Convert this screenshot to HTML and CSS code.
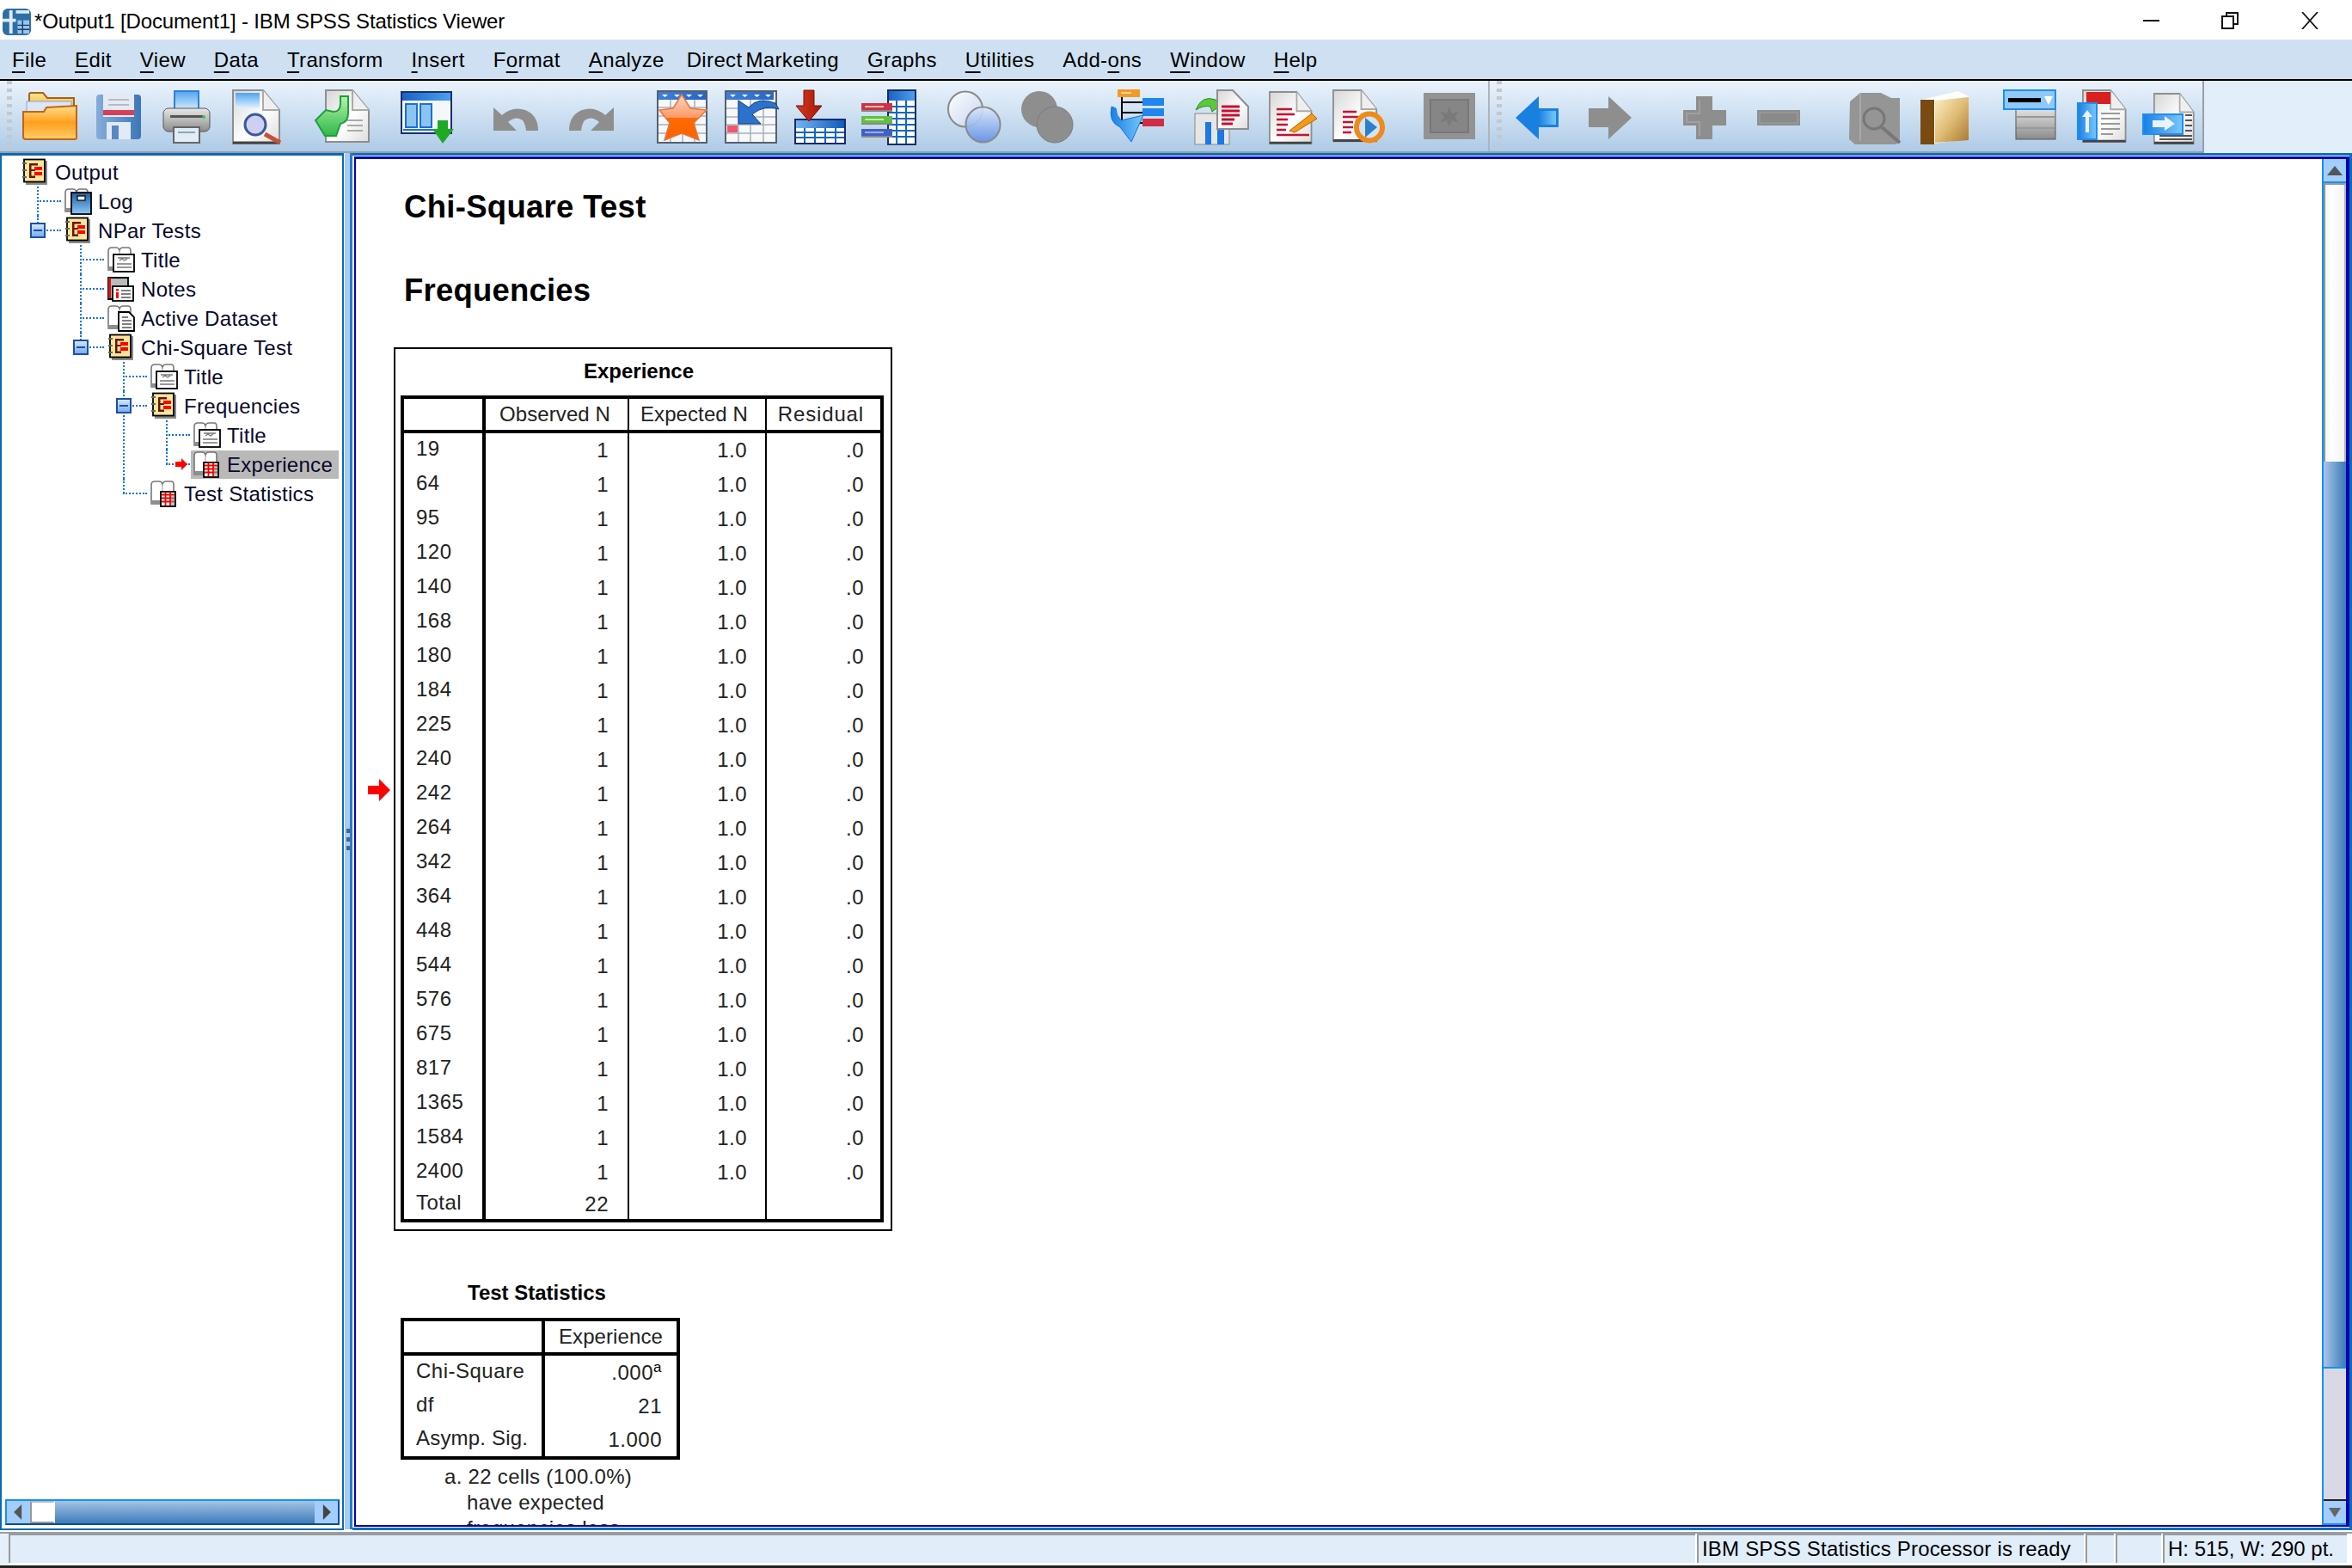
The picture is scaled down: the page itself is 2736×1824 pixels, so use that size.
FILE: index.html
```html
<!DOCTYPE html>
<html lang="en">
<head>
<meta charset="utf-8">
<title>*Output1 [Document1] - IBM SPSS Statistics Viewer</title>
<link rel="stylesheet" href="styles.css">
</head>
<body>
<svg class="defs" width="0" height="0" aria-hidden="true">
<defs>
<linearGradient id="gFolder" x1="0" y1="0" x2="0" y2="1"><stop offset="0" stop-color="#ffe08c"/><stop offset=".5" stop-color="#ff9f1c"/><stop offset="1" stop-color="#ffcf66"/></linearGradient>
<linearGradient id="gTab" x1="0" y1="0" x2="0" y2="1"><stop offset="0" stop-color="#ffe58f"/><stop offset="1" stop-color="#e8a93c"/></linearGradient>
<linearGradient id="gFloppy" x1="0" y1="0" x2="1" y2="0"><stop offset="0" stop-color="#86acd8"/><stop offset=".5" stop-color="#5f93cf"/><stop offset="1" stop-color="#3d76b6"/></linearGradient>
<linearGradient id="gBlueTop" x1="0" y1="0" x2="0" y2="1"><stop offset="0" stop-color="#4fa5f0"/><stop offset="1" stop-color="#e4f2fc"/></linearGradient>
<linearGradient id="gBar" x1="0" y1="0" x2="1" y2="0"><stop offset="0" stop-color="#1b62c4"/><stop offset="1" stop-color="#4aa0f0"/></linearGradient>
<linearGradient id="gBarR" x1="0" y1="0" x2="1" y2="0"><stop offset="0" stop-color="#74b4f2"/><stop offset="1" stop-color="#0f5cbc"/></linearGradient>
<linearGradient id="gGrey" x1="0" y1="0" x2="0" y2="1"><stop offset="0" stop-color="#e8e8e8"/><stop offset="1" stop-color="#8b8b8b"/></linearGradient>
<linearGradient id="gDoc" x1="0" y1="0" x2="1" y2="1"><stop offset="0" stop-color="#d6d6d6"/><stop offset=".55" stop-color="#ffffff"/><stop offset="1" stop-color="#dcdcdc"/></linearGradient>
<linearGradient id="gGreen" x1="0" y1="0" x2="0" y2="1"><stop offset="0" stop-color="#b4f4a8"/><stop offset="1" stop-color="#2fb84a"/></linearGradient>
<linearGradient id="gStar" x1="0" y1="0" x2="0" y2="1"><stop offset="0" stop-color="#ffd8c0"/><stop offset=".5" stop-color="#ff9a68"/><stop offset=".51" stop-color="#ff6a00"/><stop offset="1" stop-color="#ff6200"/></linearGradient>
<linearGradient id="gRed" x1="0" y1="0" x2="1" y2="0"><stop offset="0" stop-color="#d93a20"/><stop offset="1" stop-color="#a01808"/></linearGradient>
<linearGradient id="gCircA" x1="0" y1="0" x2="1" y2="1"><stop offset="0" stop-color="#ffffff"/><stop offset="1" stop-color="#c4d4f0"/></linearGradient>
<linearGradient id="gCircB" x1="0" y1="0" x2="0" y2="1"><stop offset="0" stop-color="#dce8fa"/><stop offset="1" stop-color="#5f8fe4"/></linearGradient>
<linearGradient id="gSky" x1="0" y1="0" x2="1" y2="0"><stop offset="0" stop-color="#1a7fe4"/><stop offset="1" stop-color="#78c8fa"/></linearGradient>
<linearGradient id="gBook" x1="0" y1="0" x2="1" y2="1"><stop offset="0" stop-color="#fbf0c4"/><stop offset=".5" stop-color="#e0bc74"/><stop offset="1" stop-color="#a87830"/></linearGradient>
<linearGradient id="gLog" x1="0" y1="0" x2="0" y2="1"><stop offset="0" stop-color="#1a5fa8"/><stop offset="1" stop-color="#8cc8f4"/></linearGradient>
<linearGradient id="gHead" x1="0" y1="0" x2="1" y2="0"><stop offset="0" stop-color="#3f7fd8"/><stop offset="1" stop-color="#2a66c4"/></linearGradient>

<symbol id="i-sec" viewBox="0 0 32 32">
<rect x="5" y="3" width="25" height="28" fill="#8a8a8a"/>
<rect x="3" y="1.500" width="24" height="26" fill="#fde69a" stroke="#000" stroke-width="1.800"/>
<rect x="1" y="5" width="5" height="2" fill="#666"/><rect x="1" y="13" width="5" height="2" fill="#666"/><rect x="1" y="21" width="5" height="2" fill="#666"/>
<rect x="9" y="6" width="2.500" height="17" fill="#70100a"/><rect x="9" y="6" width="10" height="2.500" fill="#70100a"/><rect x="9" y="13" width="7" height="2" fill="#70100a"/><rect x="9" y="20.500" width="7" height="2.500" fill="#70100a"/>
<rect x="15" y="10" width="9" height="4" fill="#f00"/><rect x="15" y="16" width="9" height="4" fill="#f00"/>
</symbol>
<symbol id="i-base" viewBox="0 0 32 32">
<path d="M1 28V6Q1 2 5 2H10Q13 2 14 5Q15 2 18 2H24Q27 2 27 6V28Z" fill="#fff" stroke="#777" stroke-width="1.600"/>
<path d="M14 5V24" stroke="#999" stroke-width="1"/>
<rect x="1" y="24" width="28" height="5" fill="#8e8e8e"/>
</symbol>
<symbol id="i-log" viewBox="0 0 32 32">
<use href="#i-base"/>
<rect x="8" y="6" width="23" height="25" fill="url(#gLog)" stroke="#000" stroke-width="1.800"/>
<rect x="15" y="10" width="9" height="5" fill="#fff" stroke="#000" stroke-width="1.200"/>
</symbol>
<symbol id="i-title" viewBox="0 0 32 32">
<use href="#i-base"/>
<rect x="7" y="10" width="24" height="20" fill="#fff" stroke="#000" stroke-width="1.800"/>
<path d="M12 14H26M14 17L17 15L20 17L23 15M11 21H28M11 25H28" stroke="#777" stroke-width="1.400" fill="none"/>
</symbol>
<symbol id="i-notes" viewBox="0 0 32 32">
<path d="M1 28V3H24V28Z" fill="#bbb" stroke="#000" stroke-width="1.800"/>
<rect x="1" y="3" width="3" height="24" fill="#d01818"/>
<rect x="6" y="13" width="24" height="17" fill="#fff" stroke="#000" stroke-width="1.800"/>
<rect x="10" y="16" width="3" height="2.500" fill="#f00"/><rect x="10" y="20" width="3" height="7" fill="#f00"/>
<path d="M16 18H27M16 22H27M16 26H27" stroke="#555" stroke-width="1.400"/>
</symbol>
<symbol id="i-data" viewBox="0 0 32 32">
<use href="#i-base"/>
<path d="M13 9H25L31 15V31H13Z" fill="#fff" stroke="#000" stroke-width="1.800"/>
<path d="M17 15H24M17 19H28M17 23H28M17 27H28" stroke="#555" stroke-width="1.500"/>
</symbol>
<symbol id="i-table" viewBox="0 0 32 32">
<use href="#i-base"/>
<rect x="12" y="14" width="17" height="17" fill="#fff" stroke="#000" stroke-width="1.800"/>
<path d="M13 17.500H28M13 21.500H28M13 25.500H28M17.500 14V30M23 14V30" stroke="#e00" stroke-width="1.800"/>
<rect x="24" y="18" width="4" height="12" fill="#999" opacity=".6"/>
</symbol>

<symbol id="t-doc" viewBox="0 0 64 64">
<path d="M1 1H36L55 24V63H1Z" fill="url(#gDoc)" stroke="#8e8e8e" stroke-width="2"/>
<path d="M36 1V24H55" fill="#efefef" stroke="#aaa" stroke-width="2"/>
<path d="M1 62H55" stroke="#444" stroke-width="3"/>
</symbol>
<symbol id="t-head" viewBox="0 0 64 64">
<rect x="2" y="3" width="55" height="9" fill="url(#gHead)"/>
<path d="M6 6H13L9.500 9ZM20 6H27L23.500 9ZM34 6H41L37.500 9ZM47 6H54L50.500 9Z" fill="#fff"/>
</symbol>
</defs>
</svg>

<div class="app">
  <header class="titlebar">
    <svg class="appicon" viewBox="0 0 34 32"><rect x="0" y="0" width="34" height="32" rx="6" fill="#2d6ea6"/><path d="M0 14H16M10 2V30M16 4H32" stroke="#dbeafa" stroke-width="4" fill="none"/><rect x="18" y="14" width="14" height="16" fill="#9cc4e8"/><path d="M18 20H32M18 25H32M24 14V30" stroke="#14406e" stroke-width="1.500"/></svg>
    <span class="titletext">*Output1 [Document1] - IBM SPSS Statistics Viewer</span>
    <div class="winctl">
      <svg class="wbtn wmin" viewBox="0 0 20 20"><path d="M0 10H19" stroke="#111" stroke-width="2"/></svg>
      <svg class="wbtn wmax" viewBox="0 0 20 20"><rect x="1" y="5" width="13" height="14" fill="#fff" stroke="#111" stroke-width="2"/><path d="M6 4V1H19V14H15" fill="none" stroke="#111" stroke-width="2"/></svg>
      <svg class="wbtn wclose" viewBox="0 0 20 20"><path d="M1 0L19 20M19 0L1 20" stroke="#111" stroke-width="1.800"/></svg>
    </div>
  </header>

  <nav class="menubar">
    <span><u>F</u>ile</span><span><u>E</u>dit</span><span><u>V</u>iew</span><span><u>D</u>ata</span><span><u>T</u>ransform</span><span><u>I</u>nsert</span><span>F<u>o</u>rmat</span><span><u>A</u>nalyze</span><span class="dm">Direct <u>M</u>arketing</span><span><u>G</u>raphs</span><span><u>U</u>tilities</span><span>Add-<u>o</u>ns</span><span><u>W</u>indow</span><span><u>H</u>elp</span>
  </nav>

  <div class="toolrow">
    <div class="toolbar">
      <div class="grip"></div>
      <svg class="ti" viewBox="0 0 64 64"><path d="M8 14V6Q8 4 10 4H24L29 10H60V26H8Z" fill="url(#gTab)" stroke="#a8601c" stroke-width="2"/><rect x="5" y="14" width="52" height="24" fill="#dbe7f8" stroke="#8ea6c8"/><path d="M1 26H25L28 21L63 19V56Q63 58 61 58H4Q1 58 1 55Z" fill="url(#gFolder)" stroke="#c0641a" stroke-width="2"/></svg>
      <svg class="ti" viewBox="0 0 64 64"><rect x="0" y="6" width="52" height="52" rx="4" fill="url(#gFloppy)"/><rect x="8" y="6" width="36" height="26" fill="#e6eaf0"/><path d="M14 12H38M14 18H38" stroke="#b4bcc8" stroke-width="2"/><rect x="8" y="24" width="36" height="6" fill="#d4405c"/><rect x="12" y="38" width="28" height="20" fill="#e2eaf6"/><rect x="18" y="42" width="8" height="16" fill="#5689c4"/></svg>
      <svg class="ti" viewBox="0 0 64 64"><rect x="13" y="2" width="28" height="24" fill="url(#gBlueTop)" stroke="#2f7fd8" stroke-width="2"/><rect x="0" y="22" width="54" height="27" rx="6" fill="url(#gGrey)" stroke="#555"/><rect x="8" y="30" width="38" height="3" fill="#555"/><circle cx="47" cy="32" r="2" fill="#38c060"/><rect x="12" y="44" width="30" height="18" fill="#e2ecf8" stroke="#666" stroke-width="2"/><path d="M17 50H37" stroke="#8aa" stroke-width="2"/></svg>
      <svg class="ti" viewBox="0 0 64 64"><use href="#t-doc"/><rect x="4" y="4" width="28" height="18" fill="url(#gBlueTop)"/><path d="M38 52L56 62" stroke="#c8503a" stroke-width="5"/><circle cx="27" cy="41" r="12" fill="#cfcff4" stroke="#3a5a9a" stroke-width="3"/></svg>
      <svg class="ti" viewBox="0 0 64 64"><g transform="translate(12 0)"><path d="M1 1H32L51 24V61H1Z" fill="url(#gDoc)" stroke="#8e8e8e" stroke-width="2"/><path d="M32 1V24H51" fill="#efefef" stroke="#aaa" stroke-width="2"/><path d="M26 36H44M26 42H44M26 48H44" stroke="#aaa" stroke-width="2"/></g><path d="M1 36L13 24L22 26Q30 26 30 16V8H39V28Q39 38 30 40L25 54H12Z" fill="url(#gGreen)" stroke="#1e9e3e" stroke-width="2"/></svg>
      <svg class="ti" viewBox="0 0 64 64"><rect x="1" y="3" width="58" height="48" fill="#f4f8fc" stroke="#1a2f70" stroke-width="2"/><rect x="2" y="4" width="56" height="9" fill="url(#gBar)"/><rect x="6" y="17" width="13" height="27" fill="#8cc4f0" stroke="#1a6fd8" stroke-width="2"/><rect x="23" y="17" width="13" height="27" fill="#8cc4f0" stroke="#1a6fd8" stroke-width="2"/><path d="M3 47H40" stroke="#1a6fd8" stroke-width="2"/><path d="M43 36H55V46H62L49 63L37 46H43Z" fill="#1faa26"/></svg>
      <svg class="ti" viewBox="0 0 64 64"><path d="M0 21V48H27L17 38Q26 30 34 36Q37 40 38 48H52Q52 30 37 24Q22 19 10 30Z" fill="#8e8e8e"/></svg>
      <svg class="ti" viewBox="0 0 64 64"><path d="M52 21V48H25L35 38Q26 30 18 36Q15 40 14 48H0Q0 30 15 24Q30 19 42 30Z" fill="#8e8e8e"/></svg>
      <svg class="ti" viewBox="0 0 64 64"><rect x="1" y="2" width="57" height="60" fill="#f6f8fa" stroke="#55606e" stroke-width="2"/><use href="#t-head"/><path d="M2 21H57M2 31H57M2 41H57M2 51H57M16 12V61M30 12V61M44 12V61" stroke="#a8b0b8" stroke-width="1.500"/><path d="M29 6L39 22L58 24L43 39L49 59L29 51L9 59L15 39L3 24L19 22Z" fill="url(#gStar)" stroke="#e07840" stroke-width="1.500"/></svg>
      <svg class="ti" viewBox="0 0 64 64"><rect x="1" y="2" width="59" height="60" fill="#f6f8fa" stroke="#55606e" stroke-width="2"/><use href="#t-head"/><path d="M2 22H59M2 32H59M2 41H59M2 51H59M16 12V61M30 12V61M45 12V61" stroke="#a8b0b8" stroke-width="1.500"/><rect x="3" y="42" width="12" height="8" fill="#f0566e"/><path d="M16 13V40H42L32 29Q47 17 63 23L59 16Q39 8 28 21Z" fill="#2c72cc" stroke="#163c86"/></svg>
      <svg class="ti" viewBox="0 0 64 64"><rect x="1" y="35" width="58" height="28" fill="#fff" stroke="#1a2a6a" stroke-width="2"/><rect x="2" y="36" width="56" height="9" fill="url(#gBarR)"/><path d="M2 50H58M2 56H58M12 45V62M24 45V62M36 45V62M48 45V62" stroke="#1466bc" stroke-width="2"/><path d="M11 1H23V19H32L17 37L2 19H11Z" fill="url(#gRed)" stroke="#7a1008"/></svg>
      <svg class="ti" viewBox="0 0 64 64"><rect x="31" y="1" width="32" height="63" fill="#fff" stroke="#1a2a6a" stroke-width="2"/><rect x="32" y="2" width="30" height="11" fill="url(#gBar)"/><path d="M32 20H62M32 27H62M32 34H62M32 41H62M32 48H62M32 55H62M41 13V63M52 13V63" stroke="#1466bc" stroke-width="2"/><rect x="0" y="16" width="36" height="8" fill="#d03048"/><rect x="4" y="19" width="22" height="2" fill="#f0c0a0"/><rect x="0" y="24" width="36" height="2" fill="#888"/><rect x="0" y="31" width="36" height="8" fill="#60c040"/><rect x="4" y="34" width="22" height="2" fill="#c8f0a0"/><rect x="0" y="39" width="36" height="2" fill="#888"/><rect x="0" y="46" width="36" height="8" fill="#4060c8"/><rect x="4" y="49" width="22" height="2" fill="#a0a8f8"/><rect x="0" y="54" width="36" height="2" fill="#888"/></svg>
      <svg class="ti" viewBox="0 0 64 64"><ellipse cx="21" cy="23" rx="20" ry="20.500" fill="url(#gCircA)" stroke="#8a8a8a" stroke-width="2"/><ellipse cx="41.500" cy="41" rx="20" ry="20.500" fill="url(#gCircB)" fill-opacity=".9" stroke="#8a8a8a" stroke-width="2"/></svg>
      <svg class="ti" viewBox="0 0 64 64"><ellipse cx="21" cy="23" rx="21" ry="21" fill="#8e8e8e"/><ellipse cx="39" cy="41" rx="21" ry="21" fill="#8e8e8e" stroke="#7c7c7c"/></svg>
      <svg class="ti" viewBox="0 0 64 64"><path d="M15 9V44M15 15H39M15 27H39M15 39H39" stroke="#000" stroke-width="2" fill="none"/><rect x="10" y="0" width="26" height="9" fill="#f09a28"/><rect x="14" y="3" width="12" height="2" fill="#ffd090"/><rect x="39" y="10" width="25" height="9" fill="#1f86ee"/><rect x="39" y="22" width="25" height="9" fill="#1f86ee"/><rect x="39" y="34" width="25" height="9" fill="#d02c44"/><path d="M3 20Q-1 38 13 44L26 61L40 30L14 36Q8 30 8 22Z" fill="url(#gSky)" stroke="#1a70d8"/></svg>
      <svg class="ti" viewBox="0 0 64 64"><rect x="0" y="28" width="40" height="36" fill="#e6e6e6" stroke="#888"/><rect x="12" y="38" width="7" height="26" fill="#1a78e8"/><rect x="26" y="38" width="8" height="26" fill="#1a78e8"/><path d="M1 24Q8 6 24 12L30 18L20 26L18 20Q10 18 1 24Z" fill="#5cc83c" stroke="#2e8a20"/><path d="M26 1H44L62 20V46H26Z" fill="url(#gDoc)" stroke="#8e8e8e" stroke-width="2"/><path d="M31 20H52M31 25H52M31 30H52M31 35H46M31 40H44" stroke="#c8102e" stroke-width="3"/></svg>
      <svg class="ti" viewBox="0 0 64 64"><g transform="translate(0 2) scale(.9 .97)"><use href="#t-doc"/></g><path d="M9 23H27M9 29H30M9 35H22M9 41H22M9 47H20M9 53H47" stroke="#c8102e" stroke-width="2.600"/><path d="M24 48L50 28L56 34L30 50Z" fill="#f59a16" stroke="#b86008"/></svg>
      <svg class="ti" viewBox="0 0 64 64"><g transform="scale(.93 .96)"><use href="#t-doc"/></g><path d="M12 26H28M12 32H30M12 38H24M12 44H24M12 50H22" stroke="#c8102e" stroke-width="2.600"/><ellipse cx="43" cy="44" rx="15" ry="15.500" fill="#cfe4f8" stroke="#f08a18" stroke-width="6"/><path d="M38 33L52 44L38 56Z" fill="#2f7fc8"/></svg>
      <svg class="ti" viewBox="0 0 64 64"><rect x="0" y="4" width="60" height="54" fill="#939393"/><rect x="8" y="12" width="44" height="38" fill="#868686" stroke="#777" stroke-width="2"/><path d="M30 20L33 28L41 26L36 32L41 39L33 36L30 44L27 36L19 39L24 32L19 26L27 28Z" fill="#7a7a7a"/></svg>
      <div class="sepcell"><div class="grip"></div></div>
      <svg class="ti" viewBox="0 0 64 64"><path d="M0 33L27 8V22H50V44H27V58Z" fill="#1a80e0"/><rect x="27" y="25" width="20" height="16" fill="url(#gSky)"/></svg>
      <svg class="ti" viewBox="0 0 64 64"><path d="M50 33L23 8V22H0V44H23V58Z" fill="#8e8e8e"/></svg>
      <svg class="ti" viewBox="0 0 64 64"><path d="M15 8H34V24H50V42H34V58H15V42H0V24H15Z" fill="#8e8e8e"/><path d="M19 12V28H4V38H19V54" stroke="#a0a0a0" stroke-width="2" fill="none"/></svg>
      <svg class="ti" viewBox="0 0 64 64"><rect x="0" y="24" width="50" height="18" fill="#8e8e8e"/><rect x="3" y="27" width="44" height="12" fill="#8a8a8a" stroke="#a0a0a0"/></svg>
      <svg class="ti" viewBox="0 0 64 64"><path d="M2 14L14 4H38L50 10H60V58L56 64H8L1 58Z" fill="#959595"/><path d="M14 4V60" stroke="#a8a8a8" stroke-width="2"/><circle cx="30" cy="34" r="12" fill="none" stroke="#777" stroke-width="3"/><path d="M39 44L60 62" stroke="#777" stroke-width="4"/></svg>
      <svg class="ti" viewBox="0 0 64 64"><path d="M1 12L44 2L56 8V58L16 63L1 60Z" fill="#fff"/><rect x="0" y="12" width="16" height="52" fill="#7a4a10"/><path d="M17 13L56 9V59L17 62Z" fill="url(#gBook)"/></svg>
      <svg class="ti" viewBox="0 0 64 64"><rect x="15" y="20" width="46" height="38" fill="url(#gGrey)" stroke="#555"/><path d="M16 32H60M16 45H60" stroke="#999" stroke-width="2"/><rect x="1" y="1" width="60" height="22" fill="#90c8fa" stroke="#1f8cf4" stroke-width="2"/><rect x="6" y="10" width="38" height="5" fill="#000"/><path d="M48 8H58L53 18Z" fill="#fff"/></svg>
      <svg class="ti" viewBox="0 0 64 64"><g transform="translate(6 0) scale(.92 .97)"><use href="#t-doc"/></g><rect x="11" y="3" width="28" height="14" fill="#d82020"/><path d="M28 28H50M28 34H50M28 40H50M28 46H50M28 52H42" stroke="#999" stroke-width="2"/><rect x="1" y="16" width="22" height="42" fill="url(#gSky)" stroke="#1f8cf4" stroke-width="2"/><path d="M12 24L18 32H14V50H10V32H6Z" fill="#eaf2fb"/></svg>
      <svg class="ti" viewBox="0 0 64 64"><g transform="translate(13 4) scale(.85 .94)"><use href="#t-doc"/></g><path d="M50 30H58M50 36H58M50 42H58M50 48H58M20 54H58M20 58H58" stroke="#555" stroke-width="2"/><rect x="1" y="29" width="46" height="23" fill="url(#gSky)" stroke="#1f8cf4" stroke-width="2"/><path d="M12 36H26V31L38 40L26 48V44H12Z" fill="#eaf2fb"/></svg>
    </div>
    <div class="toolrest"></div>
  </div>

  <div class="workarea">
    <aside class="leftpane">
      <div class="tree">
        <ul class="root">
          <li>
            <div class="row"><svg class="ni"><use href="#i-sec"/></svg><span class="lbl rootlbl">Output</span></div>
            <ul>
              <li><div class="row"><svg class="ni"><use href="#i-log"/></svg><span class="lbl">Log</span></div></li>
              <li class="last">
                <span class="box"></span>
                <div class="row"><svg class="ni"><use href="#i-sec"/></svg><span class="lbl">NPar Tests</span></div>
                <ul>
                  <li><div class="row"><svg class="ni"><use href="#i-title"/></svg><span class="lbl">Title</span></div></li>
                  <li><div class="row"><svg class="ni"><use href="#i-notes"/></svg><span class="lbl">Notes</span></div></li>
                  <li><div class="row"><svg class="ni"><use href="#i-data"/></svg><span class="lbl">Active Dataset</span></div></li>
                  <li class="last">
                    <span class="box"></span>
                    <div class="row"><svg class="ni"><use href="#i-sec"/></svg><span class="lbl">Chi-Square Test</span></div>
                    <ul>
                      <li><div class="row"><svg class="ni"><use href="#i-title"/></svg><span class="lbl">Title</span></div></li>
                      <li>
                        <span class="box"></span>
                        <div class="row"><svg class="ni"><use href="#i-sec"/></svg><span class="lbl">Frequencies</span></div>
                        <ul>
                          <li><div class="row"><svg class="ni"><use href="#i-title"/></svg><span class="lbl">Title</span></div></li>
                          <li class="last">
                            <svg class="treearrow" viewBox="0 0 14 14"><path d="M0 4H7V0L14 7L7 14V10H0Z" fill="#f00"/></svg>
                            <div class="row"><span class="selected"><svg class="ni"><use href="#i-table"/></svg><span class="lbl">Experience</span></span></div>
                          </li>
                        </ul>
                      </li>
                      <li class="last"><div class="row"><svg class="ni"><use href="#i-table"/></svg><span class="lbl">Test Statistics</span></div></li>
                    </ul>
                  </li>
                </ul>
              </li>
            </ul>
          </li>
        </ul>
      </div>
      <div class="hscroll">
        <div class="sbtn"><svg viewBox="0 0 12 20"><path d="M10 0V20L0 10Z" fill="#555"/></svg></div>
        <div class="hthumb"></div>
        <div class="htrack"></div>
        <div class="sbtn"><svg viewBox="0 0 12 20"><path d="M2 0V20L12 10Z" fill="#444"/></svg></div>
      </div>
    </aside>
    <div class="splitter"><span class="dots"></span></div>
    <section class="mainframe">
      <div class="mainpane">
        <div class="content">
          <svg class="cursorarrow" viewBox="0 0 26 26"><path d="M0 8H13V0L26 13L13 26V18H0Z" fill="#f00"/></svg>
          <h1 class="heading">Chi-Square Test</h1>
          <h2 class="heading sub">Frequencies</h2>
          <div class="frame">
            <div class="tabletitle">Experience</div>
            <table class="pivot big">
              <colgroup><col class="c1"><col class="c2"><col class="c3"><col class="c4"></colgroup>
              <thead><tr><th class="thick"></th><th>Observed N</th><th>Expected N</th><th class="end wide">Residual</th></tr></thead>
              <tbody>
                <tr><td class="lab">19</td><td>1</td><td>1.0</td><td class="end">.0</td></tr>
                <tr><td class="lab">64</td><td>1</td><td>1.0</td><td class="end">.0</td></tr>
                <tr><td class="lab">95</td><td>1</td><td>1.0</td><td class="end">.0</td></tr>
                <tr><td class="lab">120</td><td>1</td><td>1.0</td><td class="end">.0</td></tr>
                <tr><td class="lab">140</td><td>1</td><td>1.0</td><td class="end">.0</td></tr>
                <tr><td class="lab">168</td><td>1</td><td>1.0</td><td class="end">.0</td></tr>
                <tr><td class="lab">180</td><td>1</td><td>1.0</td><td class="end">.0</td></tr>
                <tr><td class="lab">184</td><td>1</td><td>1.0</td><td class="end">.0</td></tr>
                <tr><td class="lab">225</td><td>1</td><td>1.0</td><td class="end">.0</td></tr>
                <tr><td class="lab">240</td><td>1</td><td>1.0</td><td class="end">.0</td></tr>
                <tr><td class="lab">242</td><td>1</td><td>1.0</td><td class="end">.0</td></tr>
                <tr><td class="lab">264</td><td>1</td><td>1.0</td><td class="end">.0</td></tr>
                <tr><td class="lab">342</td><td>1</td><td>1.0</td><td class="end">.0</td></tr>
                <tr><td class="lab">364</td><td>1</td><td>1.0</td><td class="end">.0</td></tr>
                <tr><td class="lab">448</td><td>1</td><td>1.0</td><td class="end">.0</td></tr>
                <tr><td class="lab">544</td><td>1</td><td>1.0</td><td class="end">.0</td></tr>
                <tr><td class="lab">576</td><td>1</td><td>1.0</td><td class="end">.0</td></tr>
                <tr><td class="lab">675</td><td>1</td><td>1.0</td><td class="end">.0</td></tr>
                <tr><td class="lab">817</td><td>1</td><td>1.0</td><td class="end">.0</td></tr>
                <tr><td class="lab">1365</td><td>1</td><td>1.0</td><td class="end">.0</td></tr>
                <tr><td class="lab">1584</td><td>1</td><td>1.0</td><td class="end">.0</td></tr>
                <tr><td class="lab">2400</td><td>1</td><td>1.0</td><td class="end">.0</td></tr>
                <tr class="total"><td class="lab">Total</td><td>22</td><td></td><td class="end"></td></tr>
              </tbody>
            </table>
          </div>
          <div class="stats">
            <div class="tabletitle stattitle">Test Statistics</div>
            <table class="pivot small">
              <colgroup><col class="s1"><col class="s2"></colgroup>
              <thead><tr><th class="thick"></th><th class="end">Experience</th></tr></thead>
              <tbody>
                <tr><td class="lab">Chi-Square</td><td class="end">.000<sup>a</sup></td></tr>
                <tr><td class="lab">df</td><td class="end">21</td></tr>
                <tr><td class="lab sig">Asymp. Sig.</td><td class="end">1.000</td></tr>
              </tbody>
            </table>
            <p class="footnote">a. 22 cells (100.0%)<br>have expected<br>frequencies less</p>
          </div>
        </div>
        <div class="vscroll">
          <div class="vbtn"><svg viewBox="0 0 20 12"><path d="M0 12H20L10 0Z" fill="#555"/></svg></div>
          <div class="vthumb"></div>
          <div class="vtrack"></div>
          <div class="vthumb lower"></div>
          <div class="vbtn"><svg viewBox="0 0 20 12"><path d="M2 0H18L10 12Z" fill="#666"/></svg></div>
        </div>
      </div>
    </section>
  </div>

  <footer class="statusbar">
    <div class="cell grow"></div>
    <div class="cell ready">IBM SPSS Statistics Processor is ready</div>
    <div class="cell w33"></div>
    <div class="cell w53"></div>
    <div class="cell size">H: 515, W: 290 pt.</div>
  </footer>
</div>
</body>
</html>
```

FILE: styles.css
```css
* { box-sizing: border-box; }
html, body { margin: 0; padding: 0; }
body {
  width: 2736px;
  height: 1824px;
  overflow: hidden;
  background: #fff;
  font-family: "Liberation Sans", Arial, sans-serif;
  font-size: 24px;
  color: #111;
}
.defs { position: absolute; }
.app { display: flex; flex-direction: column; height: 1824px; }

/* title bar */
.titlebar { display: flex; align-items: center; height: 46px; flex: none; padding-left: 3px; background: #fff; }
.appicon { width: 33px; height: 31px; flex: none; margin-top: 4px; }
.titletext { margin-left: 4px; letter-spacing: -.15px; white-space: nowrap; color: #000; margin-top: 3px; }
.winctl { margin-left: auto; display: flex; align-items: center; padding-right: 39px; }
.wbtn { width: 20px; height: 20px; display: block; margin-top: 1px; }
.wmin { margin-right: 71px; }
.wmax { margin-right: 73px; }

/* menu */
.menubar {
  display: flex; align-items: center; gap: 33px; flex: none;
  height: 48px; padding: 1px 0 0 14px;
  background: #cee0f1; border-bottom: 2px solid #000;
  white-space: nowrap; color: #000;
}
.menubar span { letter-spacing: .35px; }
.menubar .dm { margin-left: -7px; word-spacing: -3px; }
.menubar u { text-decoration-thickness: 2px; text-underline-offset: 5px; }

/* toolbar */
.toolrow { display: flex; flex: none; height: 84px; }
.toolbar {
  width: 2564px; height: 84px; padding-left: 8px;
  display: grid; align-items: center;
  grid-template-columns: 18px 86px 78px 80px 96px 100px 108px 88px 102px 79px 81px 78px 100px 86px 102px 100px 86px 74px 106px 75px 32px 85px 110px 86px 106px 84px 96px 86px 76px 70px;
  background: linear-gradient(#eaf3fc, #afcbe7);
  border-bottom: 2px solid #9a9fa5;
  border-right: 2px solid #9a9fa5;
}
.ti { width: 64px; height: 64px; margin-top: 2px; overflow: visible; display: block; }
.grip {
  width: 6px; height: 82px;
  background: repeating-linear-gradient(#c4c8cc 0 4px, transparent 4px 9px);
}
.sepcell { height: 82px; border-left: 2px solid #b0b4b8; padding-left: 8px; }
.toolrest { flex: 1; background: #e2eefa; }

/* work area */
.workarea { flex: 1; display: flex; min-height: 0; padding-bottom: 2px; background: #fff; }
.leftpane {
  width: 400px; flex: none; display: flex; flex-direction: column;
  border: 3px solid #0a68b8; border-right-width: 2px; border-left-width: 2px; border-bottom-width: 2px;
  padding: 0 3px 4px 4px; background: #fff;
}
.tree { flex: 1; min-height: 0; padding-top: 2px; overflow: hidden; margin-left: -6px; }
.tree ul { list-style: none; margin: 0; padding: 0 0 0 50px; }
.tree ul.root { padding-left: 0; margin-left: -7px; }
.tree li { position: relative; }
.tree ul ul > li::before {
  content: ""; position: absolute; left: 0; top: 0; bottom: 0;
  border-left: 2px dotted #0b72dc;
}
.tree ul ul > li.last::before { bottom: auto; height: 17px; }
.tree ul ul > li::after {
  content: ""; position: absolute; left: 0; top: 16px; width: 28px;
  border-top: 2px dotted #0b72dc;
}
.row { height: 34px; display: flex; align-items: center; padding-left: 32px; position: relative; z-index: 1; white-space: nowrap; }
.ni { width: 32px; height: 32px; flex: none; }
.lbl { margin: 2px 0 0 7px; letter-spacing: .3px; color: #08082a; }
.selected { display: flex; align-items: center; height: 33px; margin-left: -3px; padding: 0 7px 0 3px; background: #b9b9b9; }
.box {
  position: absolute; left: -8px; top: 8px; width: 18px; height: 18px; z-index: 2;
  border: 2px solid #1b50a8; background: linear-gradient(#d4e5fb, #7aaeee);
}
.box::after { content: ""; position: absolute; left: 2px; right: 2px; top: 6px; height: 2px; background: #1b50a8; }
.treearrow { position: absolute; left: 11px; top: 10px; width: 14px; height: 14px; z-index: 2; }

/* scrollbars */
.hscroll {
  height: 30px; flex: none; display: flex; margin-top: 0;
  border: 2px solid #1690f0; border-bottom-color: #0a4f90; border-right-color: #0a4f90;
}
.sbtn { width: 27px; flex: none; background: #a2cdfc; display: flex; align-items: center; justify-content: center; }
.sbtn svg { width: 11px; height: 18px; }
.hthumb { width: 29px; flex: none; background: #fff; border: 2px solid #aaa; border-color: #bbb #fff #999 #999; }
.htrack { flex: 1; background: linear-gradient(#a4c4e4, #3d7cbb); }

.splitter {
  width: 9px; flex: none; margin-left: 1px; margin-bottom: 1px; position: relative;
  background: linear-gradient(90deg, #a2cdfc 0 6px, #2c7ac0 6px);
}
.dots {
  position: absolute; left: 2px; top: 786px; width: 4px; height: 26px;
  background: repeating-linear-gradient(#44639a 0 5px, transparent 5px 10px);
}
.mainframe {
  flex: 1; min-width: 0; display: flex; padding: 1px 0 1px 2px;
  border-top: 3px solid #0f6db8; border-right: 3px solid #0f6db8; border-bottom: 3px solid #0f6db8;
}
.mainpane {
  flex: 1; min-width: 0; display: flex; background: #fff;
  border: 3px solid #0000b4; border-left-width: 2px; border-bottom-width: 2px; border-right-width: 4px;
}
.content { flex: 1; min-width: 0; overflow: hidden; padding: 34px 0 0 56px; position: relative; color: #000; }
.cursorarrow { position: absolute; left: 14px; top: 721px; width: 26px; height: 26px; }

.vscroll { width: 28px; flex: none; display: flex; flex-direction: column; border-left: 2px solid #1690f0; }
.vbtn { height: 28px; flex: none; background: #a2cdfc; display: flex; align-items: center; justify-content: center; border-bottom: 2px solid #1690f0; }
.vbtn svg { width: 18px; height: 11px; }
.vthumb { height: 324px; flex: none; background: linear-gradient(90deg, #f4f4f6, #fff 30%, #f2f2f4); border-left: 2px solid #8d959b; border-right: 2px solid #b4b4b4; border-top: 2px solid #999; }
.vtrack { flex: 1; background: linear-gradient(90deg, #a8c6e6, #3b7ab9); }
.vthumb.lower { height: 156px; background: #d9d9e6; border: 0; border-top: 2px solid #1690f0; border-bottom: 2px solid #222; }

/* output */
.heading { margin: 0; font-size: 36.500px; line-height: 44px; font-weight: bold; letter-spacing: .3px; color: #000; }
.sub { margin-top: 53px; letter-spacing: .2px; }
.frame { width: 580px; margin: 44px 0 0 -12px; border: 2px solid #000; padding: 0 6px 8px; }
.tabletitle { height: 54px; line-height: 51px; text-align: center; font-weight: bold; padding-right: 10px; }
.pivot { border-collapse: separate; border-spacing: 0; table-layout: fixed; border: 4px solid #000; color: #222; }
.big { width: 562px; }
.small { width: 325px; }
.c1 { width: 95px; } .c2 { width: 167px; } .c3 { width: 160px; } .c4 { width: 132px; }
.s1 { width: 164px; } .s2 { width: 153px; }
.pivot th, .pivot td { padding: 0 21px 0 0; text-align: right; font-weight: normal; line-height: 24px; letter-spacing: .5px; border-right: 2px solid #000; white-space: nowrap; }
.pivot th { height: 40px; padding-right: 20px; letter-spacing: .1px; border-bottom: 4px solid #000; }
.pivot td { height: 40px; }
.pivot .total td { height: 34px; }
.pivot th.thick { border-right-width: 4px; }
.pivot td.lab { text-align: left; padding: 0 0 4px 14px; border-right-width: 4px; }
.pivot td.sig { letter-spacing: .2px; }
.pivot th.end, .pivot td.end { border-right: 0; padding-right: 19px; }
.pivot th.end { padding-right: 18px; }
.pivot th.wide { letter-spacing: .85px; padding-right: 19px; }
.big td:nth-child(2) { padding-right: 22px; }
.small td { height: 39px; }
.small td.end { padding-right: 17px; }
.small th { height: 40px; }
.small th.end { padding-right: 16px; }
.pivot sup { font-size: 17px; line-height: 0; vertical-align: 9px; color: #000; }
.stats { margin: 57px 0 0 -4px; width: 325px; }
.stattitle { height: 30px; line-height: 30px; margin-bottom: 14px; padding-right: 8px; color: #000; }
.footnote { margin: 5px 0 0; padding-left: 77px; text-indent: -26px; line-height: 30px; letter-spacing: .3px; white-space: nowrap; color: #222; }

/* status bar */
.statusbar {
  height: 42px; flex: none; display: flex; gap: 2px;
  padding: 0 6px 3px 10px;
  border-top: 2px solid #9a9fa5; border-bottom: 3px solid #222;
  background: #fff;
  box-shadow: inset 10px 0 0 #e6f0fa;
  color: #000;
}
.cell { background: #e1edf9; border-top: 2px solid #9a9a9a; border-left: 2px solid #9a9a9a; line-height: 31px; letter-spacing: .2px; white-space: nowrap; padding-left: 4px; }
.grow { flex: 1; }
.ready { width: 450px; }
.w33 { width: 33px; }
.w53 { width: 53px; }
.size { width: 214px; letter-spacing: 0; }
```
